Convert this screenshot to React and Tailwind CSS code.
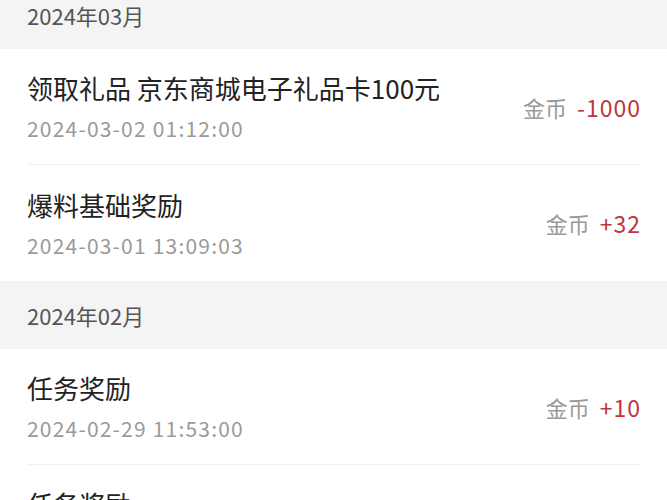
const font = { fontFamily: '"Noto Sans CJK SC", "Noto Sans", sans-serif' };

const groups = [
  {
    month: "2024年03月",
    items: [
      { title: "领取礼品 京东商城电子礼品卡100元", time: "2024-03-02 01:12:00", amount: "-1000" },
      { title: "爆料基础奖励", time: "2024-03-01 13:09:03", amount: "+32" },
    ],
  },
  {
    month: "2024年02月",
    items: [
      { title: "任务奖励", time: "2024-02-29 11:53:00", amount: "+10" },
      { title: "任务奖励", time: "2024-02-29 11:50:00", amount: "+10" },
    ],
  },
];

export default function App() {
  return (
    <div className="w-[667px] h-[500px] overflow-hidden bg-white" style={font}>
      <div className="mt-[-19px]">
        {groups.map((group) => (
          <section key={group.month}>
            <div className="flex h-[68px] items-center bg-[#f4f4f4] px-[27px] text-[22px] text-[#555]">
              {group.month}
            </div>
            {group.items.map((item, i) => (
              <div key={i} className="px-[27px]">
                <div
                  className={`flex h-[116px] items-center justify-between ${
                    i < group.items.length - 1 || group.month === "2024年02月" ? "border-b border-[#f0f0f0]" : ""
                  }`}
                >
                  <div className="flex flex-col gap-[9px]">
                    <p className="text-[26px] leading-[34px] text-[#222]">{item.title}</p>
                    <p className="text-[21px] leading-[28px] tracking-[1.2px] text-[#9a9a9a]">{item.time}</p>
                  </div>
                  <p className="flex items-center text-[22px] leading-[30px]">
                    <span className="text-[#999]">金币</span>
                    <span className="ml-[10px] mr-[-1px] text-[23px] tracking-[1px] text-[#c2343b]">{item.amount}</span>
                  </p>
                </div>
              </div>
            ))}
          </section>
        ))}
      </div>
    </div>
  );
}
